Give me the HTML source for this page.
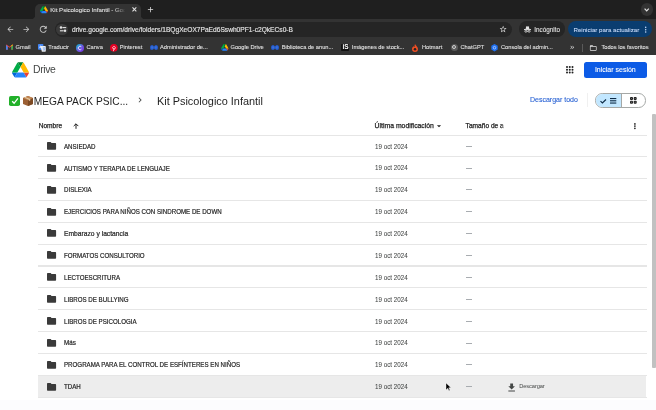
<!DOCTYPE html>
<html><head><meta charset="utf-8"><style>
*{box-sizing:border-box;margin:0;padding:0}
html,body{width:656px;height:410px;overflow:hidden;background:#fff;font-family:"Liberation Sans",sans-serif}
.a{position:absolute;white-space:nowrap;line-height:1}
svg.a{overflow:visible}
.t6{font-size:6.1px;-webkit-text-stroke:.08px currentColor}
.t55{font-size:5.7px;-webkit-text-stroke:.08px currentColor}
.b7{font-size:7px;font-weight:bold}
.m7{font-size:7px;-webkit-text-stroke:.1px currentColor}
.h6{font-size:6.6px;color:#1f1f1f;-webkit-text-stroke:.25px currentColor}
.r6{font-size:7px;color:#1f1f1f;transform:scaleX(.883);transform-origin:0 0;-webkit-text-stroke:.2px currentColor}
.dg{color:#444746;transform:scaleX(.891);-webkit-text-stroke:.05px currentColor}
</style></head><body><div id="w" style="position:absolute;left:0;top:0;width:656px;height:410px;will-change:transform">
<div class="a" style="left:0;top:0;width:656px;height:18.6px;background:#1f1f1f"></div>
<div class="a" style="left:0;top:18.6px;width:656px;height:36.4px;background:#333333"></div>
<div class="a" style="left:35px;top:4px;width:106px;height:16px;background:#333333;border-radius:5px 5px 0 0"></div>
<div class="a" style="left:31px;top:14.6px;width:4px;height:4px;background:radial-gradient(circle at 0 0,rgba(0,0,0,0) 4px,#333333 4.5px)"></div>
<div class="a" style="left:141px;top:14.6px;width:4px;height:4px;background:radial-gradient(circle at 100% 0,rgba(0,0,0,0) 4px,#333333 4.5px)"></div>
<svg class="a" style="left:39.5px;top:6px" width="8" height="7.2" viewBox="0 0 87.3 78"><path d="M6.6 66.85l3.85 6.65c.8 1.4 1.95 2.5 3.3 3.3L27.5 53H0c0 1.55.4 3.1 1.2 4.5z" fill="#0066da"/><path d="M43.65 25L29.9 1.2c-1.35.8-2.5 1.9-3.3 3.3L1.2 48.5A9.06 9.06 0 000 53h27.5z" fill="#00ac47"/><path d="M73.55 76.8c1.35-.8 2.5-1.9 3.3-3.3l1.6-2.75 7.65-13.25c.8-1.4 1.2-2.95 1.2-4.5H59.8L65.65 64.5z" fill="#ea4335"/><path d="M43.65 25L57.4 1.2C56.05.4 54.5 0 52.9 0H34.4c-1.6 0-3.15.45-4.5 1.2z" fill="#00832d"/><path d="M59.8 53H27.5L13.75 76.8c1.35.8 2.9 1.2 4.5 1.2h50.8c1.6 0 3.15-.45 4.5-1.2z" fill="#2684fc"/><path d="M73.4 26.5l-12.7-22c-.8-1.4-1.95-2.5-3.3-3.3L43.65 25 59.8 53h27.45c0-1.55-.4-3.1-1.2-4.5z" fill="#ffba00"/></svg>
<div class="a t6" style="left:50.3px;top:6.5px;color:#e3e3e3">Kit Psicologico Infantil - Goo</div>
<div class="a" style="left:114px;top:5px;width:14px;height:10px;background:linear-gradient(90deg,rgba(51,51,51,0),#333333 80%)"></div>
<svg class="a" style="left:131.5px;top:7.3px" width="4.8" height="4.8" viewBox="0 0 5 5"><path d="M.5.5l4 4M4.5.5l-4 4" stroke="#e3e3e3" stroke-width="1.1"/></svg>
<svg class="a" style="left:145.5px;top:5px" width="9" height="9" viewBox="0 0 24 24"><path d="M19 13h-6v6h-2v-6H5v-2h6V5h2v6h6v2z" fill="#e3e3e3"/></svg>
<div class="a" style="left:640.6px;top:3.3px;width:12.9px;height:12.6px;border-radius:6.3px;background:#333"></div>
<svg class="a" style="left:644.3px;top:7.6px" width="5.4" height="3.6" viewBox="0 0 5.4 3.6"><path d="M.6.6l2.1 2.2L4.8.6" fill="none" stroke="#e3e3e3" stroke-width="1.2"/></svg>
<svg class="a" style="left:5.55px;top:24.75px" width="8.7" height="8.7" viewBox="0 0 24 24"><path d="M20 11H7.83l5.59-5.59L12 4l-8 8 8 8 1.41-1.41L7.83 13H20v-2z" fill="#c7c7c7"/></svg>
<svg class="a" style="left:22.05px;top:24.75px" width="8.7" height="8.7" viewBox="0 0 24 24"><path d="M12 4l-1.41 1.41L16.17 11H4v2h12.17l-5.58 5.59L12 20l8-8z" fill="#c7c7c7"/></svg>
<svg class="a" style="left:37.85px;top:24.05px" width="10.5" height="10.5" viewBox="0 0 24 24"><path d="M17.65 6.35C16.2 4.9 14.21 4 12 4c-4.42 0-7.99 3.58-7.99 8s3.57 8 7.99 8c3.73 0 6.840-2.55 7.73-6h-2.08c-.82 2.33-3.04 4-5.65 4-3.31 0-6-2.69-6-6s2.69-6 6-6c1.66 0 3.14.69 4.22 1.78L13 11h7V4l-2.35 2.35z" fill="#c7c7c7"/></svg>
<div class="a" style="left:55px;top:21.5px;width:457px;height:15px;border-radius:7.5px;background:#252525"></div>
<div class="a" style="left:56.2px;top:23.6px;width:11.5px;height:11.5px;border-radius:5.75px;background:#3a3a3a"></div>
<svg class="a" style="left:58.5px;top:26px" width="8" height="7" viewBox="0 0 8 7"><circle cx="2" cy="1.6" r="1.25" fill="#e3e3e3"/><rect x="3.5" y="1.05" width="3.7" height="1.1" fill="#e3e3e3"/><rect x="0.9" y="4.25" width="3.7" height="1.1" fill="#e3e3e3"/><circle cx="6" cy="4.8" r="1.25" fill="#e3e3e3"/></svg>
<div class="a" style="left:72px;top:26.9px;font-size:6.63px;-webkit-text-stroke:.15px #e3e3e3;color:#e3e3e3">drive.google.com/drive/folders/1BQgXeOX7PaEd6Sswh0PF1-c2QkECs0-B</div>
<svg class="a" style="left:498.9px;top:25.2px" width="8.3" height="8.3" viewBox="0 0 24 24"><path d="M22 9.24l-7.19-.62L12 2 9.190 8.63 2 9.24l5.46 4.73L5.82 21 12 17.27 18.18 21l-1.63-7.03L22 9.24zM12 15.4l-3.76 2.27 1-4.28-3.32-2.88 4.38-.38L12 6.1l1.71 4.04 4.38.38-3.32 2.88 1 4.28L12 15.4z" fill="#e3e3e3"/></svg>
<div class="a" style="left:519.2px;top:21.2px;width:46px;height:15.6px;border-radius:7.8px;background:#252525"></div>
<svg class="a" style="left:523.5px;top:25.8px" width="7" height="6.6" viewBox="0 0 7 6.6"><path d="M1.6 3L2.2.6Q2.3.2 2.7.3L3.5.55 4.3.3Q4.7.2 4.8.6L5.4 3z" fill="#e3e3e3"/><rect x="0" y="3.1" width="7" height=".9" fill="#e3e3e3"/><circle cx="1.9" cy="5.2" r="1.05" fill="none" stroke="#e3e3e3" stroke-width=".8"/><circle cx="5.1" cy="5.2" r="1.05" fill="none" stroke="#e3e3e3" stroke-width=".8"/><rect x="2.9" y="4.9" width="1.2" height=".6" fill="#e3e3e3"/></svg>
<div class="a t6" style="left:534.2px;top:26.9px;font-size:6.35px;color:#e3e3e3">Incógnito</div>
<div class="a" style="left:568.4px;top:20.8px;width:83.8px;height:16.6px;border-radius:8.3px;background:#0a3d70"></div>
<div class="a t6" style="left:573.5px;top:27.1px;font-size:6.14px;color:#c9dcfb">Reiniciar para actualizar</div>
<svg class="a" style="left:641.3px;top:24.8px" width="9.4" height="9.4" viewBox="0 0 24 24"><path d="M12 8c1.1 0 2-.9 2-2s-.9-2-2-2-2 .9-2 2 .9 2 2 2zm0 2c-1.1 0-2 .9-2 2s.9 2 2 2 2-.9 2-2-.9-2-2-2zm0 6c-1.1 0-2 .9-2 2s.9 2 2 2 2-.9 2-2-.9-2-2-2z" fill="#c9dcfb"/></svg>
<svg class="a" style="left:5.8px;top:44.3px" width="7" height="6" viewBox="0 0 24 18"><path d="M0 2v14a2 2 0 0 0 2 2h4V7l6 4.5L18 7v11h4a2 2 0 0 0 2-2V2l-2-1.5L12 8 2 .5z" fill="#ea4335"/><path d="M0 2v14a2 2 0 0 0 2 2h4V7z" fill="#4285f4"/><path d="M18 7v11h4a2 2 0 0 0 2-2V2z" fill="#34a853"/><path d="M18 7l6-5-2-1.5-4 3z" fill="#fbbc04"/></svg>
<div class="a t55" style="left:15.6px;top:45.0px;color:#e3e3e3">Gmail</div>
<svg class="a" style="left:37.7px;top:43.6px" width="7.8" height="7.8" viewBox="0 0 16 16"><rect x="0" y="0" width="11" height="12" rx="1.5" fill="#4285f4"/><path d="M5 4h9.5A1.5 1.5 0 0 1 16 5.5v9A1.5 1.5 0 0 1 14.5 16H8z" fill="#e8eaed"/><path d="M3 8.5L5 3.5 7 8.5M3.7 7h2.6" fill="none" stroke="#fff" stroke-width="1.1"/><path d="M10 8h5M12.5 7v1M11 9c.5 2 2 3.5 3.5 4M14 9c-.5 2-2 3.5-3.5 4" fill="none" stroke="#4285f4" stroke-width=".9"/></svg>
<div class="a t55" style="left:48.3px;top:45.0px;color:#e3e3e3">Traducir</div>
<svg class="a" style="left:75.8px;top:43.5px" width="8" height="8" viewBox="0 0 16 16"><defs><linearGradient id="cg" x1="0" y1="0" x2="1" y2="1"><stop offset="0" stop-color="#00c4cc"/><stop offset=".5" stop-color="#6a5ae0"/><stop offset="1" stop-color="#7d2ae8"/></linearGradient></defs><circle cx="8" cy="8" r="8" fill="url(#cg)"/><path d="M10.8 10.3A3.6 3.6 0 1 1 10.6 5.4" fill="none" stroke="#fff" stroke-width="1.6"/></svg>
<div class="a t55" style="left:86.4px;top:45.0px;color:#e3e3e3">Canva</div>
<svg class="a" style="left:109.8px;top:43.6px" width="7.7" height="7.7" viewBox="0 0 16 16"><circle cx="8" cy="8" r="8" fill="#e60023"/><path d="M7 15l1.3-6M6 9.6C5 8.6 5 6.6 6.8 5.5c2-1 4.3 0 4.3 2 0 2.3-1.5 3.6-2.6 3.3-1-.3-.8-1.4-.5-2.6" fill="none" stroke="#fff" stroke-width="1.4"/></svg>
<div class="a t55" style="left:119.8px;top:45.0px;color:#e3e3e3">Pinterest</div>
<svg class="a" style="left:150px;top:45px" width="8" height="5" viewBox="0 0 16 10"><path d="M4 1C2.3 1 1 2.8 1 5s1.3 4 3 4c1.8 0 2.8-1.8 4-3.5C9.2 7.2 10.2 9 12 9c1.7 0 3-1.8 3-4s-1.3-4-3-4C10.2 1 9.2 2.8 8 4.5 6.8 2.8 5.8 1 4 1z" fill="#3a6fd8" stroke="#2258c8" stroke-width="2.2"/></svg>
<div class="a t55" style="left:160px;top:45.0px;color:#e3e3e3">Administrador de...</div>
<svg class="a" style="left:220.9px;top:44px" width="7.5" height="6.7" viewBox="0 0 87.3 78"><path d="M6.6 66.85l3.85 6.65c.8 1.4 1.95 2.5 3.3 3.3L27.5 53H0c0 1.55.4 3.1 1.2 4.5z" fill="#0066da"/><path d="M43.65 25L29.9 1.2c-1.35.8-2.5 1.9-3.3 3.3L1.2 48.5A9.06 9.06 0 000 53h27.5z" fill="#00ac47"/><path d="M73.55 76.8c1.35-.8 2.5-1.9 3.3-3.3l1.6-2.75 7.65-13.25c.8-1.4 1.2-2.95 1.2-4.5H59.8L65.65 64.5z" fill="#ea4335"/><path d="M43.65 25L57.4 1.2C56.05.4 54.5 0 52.9 0H34.4c-1.6 0-3.15.45-4.5 1.2z" fill="#00832d"/><path d="M59.8 53H27.5L13.75 76.8c1.35.8 2.9 1.2 4.5 1.2h50.8c1.6 0 3.15-.45 4.5-1.2z" fill="#2684fc"/><path d="M73.4 26.5l-12.7-22c-.8-1.4-1.95-2.5-3.3-3.3L43.65 25 59.8 53h27.45c0-1.55-.4-3.1-1.2-4.5z" fill="#ffba00"/></svg>
<div class="a t55" style="left:230.5px;top:45.0px;color:#e3e3e3">Google Drive</div>
<svg class="a" style="left:271.2px;top:45px" width="8" height="5" viewBox="0 0 16 10"><path d="M4 1C2.3 1 1 2.8 1 5s1.3 4 3 4c1.8 0 2.8-1.8 4-3.5C9.2 7.2 10.2 9 12 9c1.7 0 3-1.8 3-4s-1.3-4-3-4C10.2 1 9.2 2.8 8 4.5 6.8 2.8 5.8 1 4 1z" fill="#3a6fd8" stroke="#2258c8" stroke-width="2.2"/></svg>
<div class="a t55" style="left:281.7px;top:45.0px;color:#e3e3e3">Biblioteca de anun...</div>
<div class="a" style="left:341.2px;top:43.6px;width:7.6px;height:7.6px;border-radius:1px;background:#111"></div><div class="a" style="left:342.5px;top:43.8px;font-size:6.5px;font-weight:bold;color:#fff">iS</div>
<div class="a t55" style="left:351.8px;top:45.0px;color:#e3e3e3">Imágenes de stock...</div>
<svg class="a" style="left:412.2px;top:43.5px" width="6" height="8" viewBox="0 0 12 16"><path d="M6 0C7 3 12 5 12 10a6 6 0 0 1-12 0C0 7 2 6 3 4c.5 1.5 1 2 2 2C5 4 5 2 6 0z" fill="#ef4e23"/><circle cx="6" cy="10.5" r="2.5" fill="#222"/></svg>
<div class="a t55" style="left:422px;top:45.0px;color:#e3e3e3">Hotmart</div>
<div class="a" style="left:450.5px;top:43.8px;width:7px;height:7px;border-radius:3.5px;background:#5a5a5a"></div><div class="a" style="left:452px;top:45.3px;width:4px;height:4px;border-radius:2px;border:1px solid #d0d0d0"></div>
<div class="a t55" style="left:460.5px;top:45.0px;color:#e3e3e3">ChatGPT</div>
<svg class="a" style="left:491.4px;top:43.8px" width="7" height="7.4" viewBox="0 0 14 15"><path d="M7 0l6.5 3.75v7.5L7 15 .5 11.25v-7.5z" fill="#1e6ff0"/><circle cx="7" cy="7.5" r="2.6" fill="none" stroke="#cfe0ff" stroke-width="1.4"/></svg>
<div class="a t55" style="left:501px;top:45.0px;color:#e3e3e3">Consola del admin...</div>
<svg class="a" style="left:568.5px;top:44.2px" width="6.5" height="6.5" viewBox="0 0 24 24"><path d="M6.41 6L5 7.41 9.58 12 5 16.59 6.41 18l6-6z M13 6l-1.41 1.41L16.17 12l-4.58 4.59L13 18l6-6z" fill="#e3e3e3"/></svg>
<div class="a" style="left:582px;top:44px;width:1px;height:7.5px;background:#5a5a5a"></div>
<svg class="a" style="left:589px;top:43.5px" width="8.5" height="8" viewBox="0 0 24 24"><path d="M20 6h-8l-2-2H4c-1.1 0-1.99.9-1.99 2L2 18c0 1.1.9 2 2 2h16c1.1 0 2-.9 2-2V8c0-1.1-.9-2-2-2zm0 12H4V8h16v10z" fill="#e3e3e3"/></svg>
<div class="a t55" style="left:601.4px;top:45.0px;color:#e3e3e3">Todos los favoritos</div>
<div class="a" style="left:0;top:55px;width:656px;height:355px;background:#fff"></div>
<svg class="a" style="left:11.8px;top:61.8px" width="17" height="15.6" viewBox="0 0 87.3 78"><path d="M6.6 66.85l3.85 6.65c.8 1.4 1.95 2.5 3.3 3.3L27.5 53H0c0 1.55.4 3.1 1.2 4.5z" fill="#0066da"/><path d="M43.65 25L29.9 1.2c-1.35.8-2.5 1.9-3.3 3.3L1.2 48.5A9.06 9.06 0 000 53h27.5z" fill="#00ac47"/><path d="M73.55 76.8c1.35-.8 2.5-1.9 3.3-3.3l1.6-2.75 7.65-13.25c.8-1.4 1.2-2.95 1.2-4.5H59.8L65.65 64.5z" fill="#ea4335"/><path d="M43.65 25L57.4 1.2C56.05.4 54.5 0 52.9 0H34.4c-1.6 0-3.15.45-4.5 1.2z" fill="#00832d"/><path d="M59.8 53H27.5L13.75 76.8c1.35.8 2.9 1.2 4.5 1.2h50.8c1.6 0 3.15-.45 4.5-1.2z" fill="#2684fc"/><path d="M73.4 26.5l-12.7-22c-.8-1.4-1.95-2.5-3.3-3.3L43.65 25 59.8 53h27.45c0-1.55-.4-3.1-1.2-4.5z" fill="#ffba00"/></svg>
<div class="a" style="left:33px;top:65.0px;font-size:10.4px;letter-spacing:-.35px;color:#444746">Drive</div>
<svg class="a" style="left:565.8px;top:65.8px" width="7.5" height="7.5" viewBox="0 0 7.5 7.5" fill="#1f1f1f"><circle cx="1.0" cy="1.0" r="1"/><circle cx="1.0" cy="3.75" r="1"/><circle cx="1.0" cy="6.5" r="1"/><circle cx="3.75" cy="1.0" r="1"/><circle cx="3.75" cy="3.75" r="1"/><circle cx="3.75" cy="6.5" r="1"/><circle cx="6.5" cy="1.0" r="1"/><circle cx="6.5" cy="3.75" r="1"/><circle cx="6.5" cy="6.5" r="1"/></svg>
<div class="a" style="left:583.8px;top:61.5px;width:62.8px;height:16.3px;border-radius:2.5px;background:#0c5be6"></div>
<div class="a m7" style="left:594.9px;top:65.7px;color:#fff">Iniciar sesión</div>
<div class="a" style="left:9.3px;top:95.7px;width:10.6px;height:10.4px;border-radius:1.8px;background:#22b02a"></div>
<svg class="a" style="left:10.5px;top:97px" width="8" height="8" viewBox="0 0 8 8"><path d="M1.2 4.3l1.9 2L6.9 1.4" fill="none" stroke="#fff" stroke-width="1.3"/></svg>
<svg class="a" style="left:23.1px;top:96px" width="10" height="10.1" viewBox="0 0 22 22"><path d="M11 0l11 4.5v13L11 22 0 17.5v-13z" fill="#9c6034"/><path d="M11 9l11-4.5v13L11 22z" fill="#7d4a24"/><path d="M0 4.5L11 0l11 4.5L11 9z" fill="#c08552"/><path d="M5 2.2l11 4.5v3l-3 1.2v-3L2.5 3.3z" fill="#e4c9a0"/></svg>
<div class="a" style="left:33.8px;top:96.9px;font-size:10.2px;color:#1f1f1f">MEGA PACK PSIC...</div>
<svg class="a" style="left:135.2px;top:95.4px" width="10" height="10" viewBox="0 0 24 24"><path d="M10 6L8.59 7.41 13.17 12l-4.58 4.59L10 18l6-6z" fill="#444746"/></svg>
<div class="a" style="left:157px;top:96.3px;font-size:10.9px;color:#1f1f1f">Kit Psicologico Infantil</div>
<div class="a m7" style="left:530px;top:95.9px;color:#2a63d4">Descargar todo</div>
<div class="a" style="left:586.5px;top:93px;width:1px;height:14px;background:#f0f0f0"></div>
<div class="a" style="left:595px;top:93px;width:51px;height:14.5px;border-radius:7.25px;border:1px solid #a5a8a6;overflow:hidden;background:#fff"><div class="a" style="left:0;top:0;width:25.5px;height:12.5px;background:#c2e7ff;border-right:1px solid #a5a8a6"></div></div>
<svg class="a" style="left:600.3px;top:98.5px" width="6.5" height="4.5" viewBox="0 0 6.5 4.5"><path d="M.5 2.2l1.9 1.8L6 .5" fill="none" stroke="#0b2a45" stroke-width="1.1"/></svg>
<svg class="a" style="left:609.7px;top:98px" width="6.3" height="5.6" viewBox="0 0 6.3 5.6"><rect y="0" width="6.3" height="1.1" fill="#0b2a45"/><rect y="2.25" width="6.3" height="1.1" fill="#0b2a45"/><rect y="4.5" width="6.3" height="1.1" fill="#0b2a45"/></svg>
<svg class="a" style="left:629.5px;top:97.1px" width="6.7" height="6.7" viewBox="0 0 6.7 6.7" fill="#1f1f1f"><rect x="0" y="0" width="3" height="3" rx=".9"/><rect x="3.7" y="0" width="3" height="3" rx=".9"/><rect x="0" y="3.7" width="3" height="3" rx=".9"/><rect x="3.7" y="3.7" width="3" height="3" rx=".9"/><g fill="#fff" opacity=".35"><circle cx="1.5" cy="1.5" r=".6"/><circle cx="5.2" cy="1.5" r=".6"/><circle cx="1.5" cy="5.2" r=".6"/><circle cx="5.2" cy="5.2" r=".6"/></g></svg>
<div class="a h6" style="left:38.7px;top:123.2px">Nombre</div>
<svg class="a" style="left:73px;top:123px" width="6" height="5.8" viewBox="0 0 6 5.8"><path d="M3 5.8V.9M.7 3.1L3 .8l2.3 2.3" fill="none" stroke="#1f1f1f" stroke-width="1"/></svg>
<div class="a h6" style="left:374.6px;top:123.1px;font-size:6.85px">Última modificación</div>
<svg class="a" style="left:434.1px;top:121.1px" width="10" height="10" viewBox="0 0 24 24"><path d="M7 10l5 5 5-5z" fill="#1f1f1f"/></svg>
<div class="a h6" style="left:465.6px;top:123.2px">Tamaño de a</div>
<div class="a" style="left:500.5px;top:122px;width:4px;height:8px;background:linear-gradient(90deg,rgba(255,255,255,0),rgba(255,255,255,.75))"></div>
<svg class="a" style="left:633.6px;top:122.8px" width="1.8" height="6.2" viewBox="0 0 1.8 6.2" fill="#1f1f1f"><circle cx=".9" cy=".9" r=".85"/><circle cx=".9" cy="3.1" r=".85"/><circle cx=".9" cy="5.3" r=".85"/></svg>
<div class="a" style="left:38px;top:135px;width:609px;height:1.2px;background:#e6e6e6"></div>
<div class="a" style="left:38px;top:156.07px;width:609px;height:1.2px;background:#e6e6e6"></div>
<svg class="a" style="left:47px;top:141.94px" width="9.1" height="7.8" viewBox="2 4 20 16" preserveAspectRatio="none"><path d="M10 4H4c-1.1 0-1.99.9-1.99 2L2 18c0 1.1.9 2 2 2h16c1.1 0 2-.9 2-2V8c0-1.1-.9-2-2-2h-8l-2-2z" fill="#3a3a3a"/></svg>
<div class="a r6" style="left:64.3px;top:142.64px;transform:scaleX(0.88)">ANSIEDAD</div>
<div class="a r6 dg" style="left:374.6px;top:142.54px">19 oct 2024</div>
<div class="a" style="left:465.8px;top:145.74px;width:6px;height:.8px;background:#a8acb0"></div>
<div class="a" style="left:38px;top:177.94px;width:609px;height:1.2px;background:#e6e6e6"></div>
<svg class="a" style="left:47px;top:163.81px" width="9.1" height="7.8" viewBox="2 4 20 16" preserveAspectRatio="none"><path d="M10 4H4c-1.1 0-1.99.9-1.99 2L2 18c0 1.1.9 2 2 2h16c1.1 0 2-.9 2-2V8c0-1.1-.9-2-2-2h-8l-2-2z" fill="#3a3a3a"/></svg>
<div class="a r6" style="left:64.3px;top:164.51px;transform:scaleX(0.88)">AUTISMO Y TERAPIA DE LENGUAJE</div>
<div class="a r6 dg" style="left:374.6px;top:164.41px">19 oct 2024</div>
<div class="a" style="left:465.8px;top:167.61px;width:6px;height:.8px;background:#a8acb0"></div>
<div class="a" style="left:38px;top:199.81px;width:609px;height:1.2px;background:#e6e6e6"></div>
<svg class="a" style="left:47px;top:185.68px" width="9.1" height="7.8" viewBox="2 4 20 16" preserveAspectRatio="none"><path d="M10 4H4c-1.1 0-1.99.9-1.99 2L2 18c0 1.1.9 2 2 2h16c1.1 0 2-.9 2-2V8c0-1.1-.9-2-2-2h-8l-2-2z" fill="#3a3a3a"/></svg>
<div class="a r6" style="left:64.3px;top:186.38px;transform:scaleX(0.88)">DISLEXIA</div>
<div class="a r6 dg" style="left:374.6px;top:186.28px">19 oct 2024</div>
<div class="a" style="left:465.8px;top:189.48px;width:6px;height:.8px;background:#a8acb0"></div>
<div class="a" style="left:38px;top:221.68px;width:609px;height:1.2px;background:#e6e6e6"></div>
<svg class="a" style="left:47px;top:207.55px" width="9.1" height="7.8" viewBox="2 4 20 16" preserveAspectRatio="none"><path d="M10 4H4c-1.1 0-1.99.9-1.99 2L2 18c0 1.1.9 2 2 2h16c1.1 0 2-.9 2-2V8c0-1.1-.9-2-2-2h-8l-2-2z" fill="#3a3a3a"/></svg>
<div class="a r6" style="left:64.3px;top:208.25px;transform:scaleX(0.88)">EJERCICIOS PARA NIÑOS CON SINDROME DE DOWN</div>
<div class="a r6 dg" style="left:374.6px;top:208.15px">19 oct 2024</div>
<div class="a" style="left:465.8px;top:211.35px;width:6px;height:.8px;background:#a8acb0"></div>
<div class="a" style="left:38px;top:243.55px;width:609px;height:1.2px;background:#e6e6e6"></div>
<svg class="a" style="left:47px;top:229.42px" width="9.1" height="7.8" viewBox="2 4 20 16" preserveAspectRatio="none"><path d="M10 4H4c-1.1 0-1.99.9-1.99 2L2 18c0 1.1.9 2 2 2h16c1.1 0 2-.9 2-2V8c0-1.1-.9-2-2-2h-8l-2-2z" fill="#3a3a3a"/></svg>
<div class="a r6" style="left:64.3px;top:230.12px;transform:scaleX(0.958)">Embarazo y lactancia</div>
<div class="a r6 dg" style="left:374.6px;top:230.02px">19 oct 2024</div>
<div class="a" style="left:465.8px;top:233.22px;width:6px;height:.8px;background:#a8acb0"></div>
<div class="a" style="left:38px;top:265.42px;width:609px;height:1.2px;background:#e6e6e6"></div>
<svg class="a" style="left:47px;top:251.29px" width="9.1" height="7.8" viewBox="2 4 20 16" preserveAspectRatio="none"><path d="M10 4H4c-1.1 0-1.99.9-1.99 2L2 18c0 1.1.9 2 2 2h16c1.1 0 2-.9 2-2V8c0-1.1-.9-2-2-2h-8l-2-2z" fill="#3a3a3a"/></svg>
<div class="a r6" style="left:64.3px;top:251.99px;transform:scaleX(0.88)">FORMATOS CONSULTORIO</div>
<div class="a r6 dg" style="left:374.6px;top:251.89px">19 oct 2024</div>
<div class="a" style="left:465.8px;top:255.09px;width:6px;height:.8px;background:#a8acb0"></div>
<div class="a" style="left:38px;top:287.29px;width:609px;height:1.2px;background:#e6e6e6"></div>
<svg class="a" style="left:47px;top:273.15px" width="9.1" height="7.8" viewBox="2 4 20 16" preserveAspectRatio="none"><path d="M10 4H4c-1.1 0-1.99.9-1.99 2L2 18c0 1.1.9 2 2 2h16c1.1 0 2-.9 2-2V8c0-1.1-.9-2-2-2h-8l-2-2z" fill="#3a3a3a"/></svg>
<div class="a r6" style="left:64.3px;top:273.86px;transform:scaleX(0.88)">LECTOESCRITURA</div>
<div class="a r6 dg" style="left:374.6px;top:273.75px">19 oct 2024</div>
<div class="a" style="left:465.8px;top:276.95px;width:6px;height:.8px;background:#a8acb0"></div>
<div class="a" style="left:38px;top:309.16px;width:609px;height:1.2px;background:#e6e6e6"></div>
<svg class="a" style="left:47px;top:295.02px" width="9.1" height="7.8" viewBox="2 4 20 16" preserveAspectRatio="none"><path d="M10 4H4c-1.1 0-1.99.9-1.99 2L2 18c0 1.1.9 2 2 2h16c1.1 0 2-.9 2-2V8c0-1.1-.9-2-2-2h-8l-2-2z" fill="#3a3a3a"/></svg>
<div class="a r6" style="left:64.3px;top:295.73px;transform:scaleX(0.88)">LIBROS DE BULLYING</div>
<div class="a r6 dg" style="left:374.6px;top:295.62px">19 oct 2024</div>
<div class="a" style="left:465.8px;top:298.82px;width:6px;height:.8px;background:#a8acb0"></div>
<div class="a" style="left:38px;top:331.03px;width:609px;height:1.2px;background:#e6e6e6"></div>
<svg class="a" style="left:47px;top:316.89px" width="9.1" height="7.8" viewBox="2 4 20 16" preserveAspectRatio="none"><path d="M10 4H4c-1.1 0-1.99.9-1.99 2L2 18c0 1.1.9 2 2 2h16c1.1 0 2-.9 2-2V8c0-1.1-.9-2-2-2h-8l-2-2z" fill="#3a3a3a"/></svg>
<div class="a r6" style="left:64.3px;top:317.60px;transform:scaleX(0.88)">LIBROS DE PSICOLOGIA</div>
<div class="a r6 dg" style="left:374.6px;top:317.50px">19 oct 2024</div>
<div class="a" style="left:465.8px;top:320.69px;width:6px;height:.8px;background:#a8acb0"></div>
<div class="a" style="left:38px;top:352.90px;width:609px;height:1.2px;background:#e6e6e6"></div>
<svg class="a" style="left:47px;top:338.76px" width="9.1" height="7.8" viewBox="2 4 20 16" preserveAspectRatio="none"><path d="M10 4H4c-1.1 0-1.99.9-1.99 2L2 18c0 1.1.9 2 2 2h16c1.1 0 2-.9 2-2V8c0-1.1-.9-2-2-2h-8l-2-2z" fill="#3a3a3a"/></svg>
<div class="a r6" style="left:64.3px;top:339.47px;transform:scaleX(0.9)">Más</div>
<div class="a r6 dg" style="left:374.6px;top:339.37px">19 oct 2024</div>
<div class="a" style="left:465.8px;top:342.56px;width:6px;height:.8px;background:#a8acb0"></div>
<div class="a" style="left:38px;top:374.77px;width:609px;height:1.2px;background:#e6e6e6"></div>
<svg class="a" style="left:47px;top:360.63px" width="9.1" height="7.8" viewBox="2 4 20 16" preserveAspectRatio="none"><path d="M10 4H4c-1.1 0-1.99.9-1.99 2L2 18c0 1.1.9 2 2 2h16c1.1 0 2-.9 2-2V8c0-1.1-.9-2-2-2h-8l-2-2z" fill="#3a3a3a"/></svg>
<div class="a r6" style="left:64.3px;top:361.34px;transform:scaleX(0.88)">PROGRAMA PARA EL CONTROL DE ESFÍNTERES EN NIÑOS</div>
<div class="a r6 dg" style="left:374.6px;top:361.24px">19 oct 2024</div>
<div class="a" style="left:465.8px;top:364.44px;width:6px;height:.8px;background:#a8acb0"></div>
<div class="a" style="left:38.4px;top:375.87px;width:608px;height:21.37px;background:#ededed"></div>
<div class="a" style="left:38px;top:396.64px;width:609px;height:1.2px;background:#e6e6e6"></div>
<svg class="a" style="left:47px;top:382.50px" width="9.1" height="7.8" viewBox="2 4 20 16" preserveAspectRatio="none"><path d="M10 4H4c-1.1 0-1.99.9-1.99 2L2 18c0 1.1.9 2 2 2h16c1.1 0 2-.9 2-2V8c0-1.1-.9-2-2-2h-8l-2-2z" fill="#3a3a3a"/></svg>
<div class="a r6" style="left:64.3px;top:383.21px;transform:scaleX(0.88)">TDAH</div>
<div class="a r6 dg" style="left:374.6px;top:383.11px">19 oct 2024</div>
<div class="a" style="left:465.8px;top:386.31px;width:6px;height:.8px;background:#a8acb0"></div>
<svg class="a" style="left:505.6px;top:381.5px" width="11.3" height="11.3" viewBox="0 0 24 24"><path d="M19 9h-4V3H9v6H5l7 7 7-7zM5 18v2h14v-2H5z" fill="#444746"/></svg>
<div class="a" style="left:519.3px;top:383.50px;font-size:5.7px;letter-spacing:-.1px;color:#444746">Descargar</div>
<svg class="a" style="left:446px;top:382.5px" width="5" height="7.5" viewBox="0 0 10 15"><path d="M0 0v14l3.5-3.5 2.5 5 2-1-2.5-5H10z" fill="#000" stroke="#fff" stroke-width=".8"/></svg>
<div class="a" style="left:652px;top:113.5px;width:4px;height:254px;border-radius:1px;background:#c1c1c1"></div>
<div class="a" style="left:0;top:400px;width:656px;height:10px;background:#fcfcfe"></div>
</div></body></html>
